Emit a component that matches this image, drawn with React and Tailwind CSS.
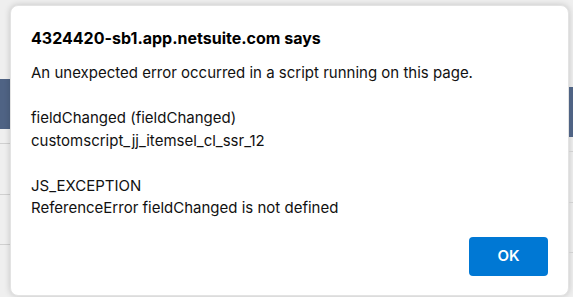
const lines = [
  'An unexpected error occurred in a script running on this page.',
  '',
  'fieldChanged (fieldChanged)',
  'customscript_jj_itemsel_cl_ssr_12',
  '',
  'JS_EXCEPTION',
  'ReferenceError fieldChanged is not defined',
];

const PageEdge = ({ top, className }) => (
  <div className={className}>
    <div style={{ height: top }} />
    <div className="h-[50px] bg-[#4f6384]" />
    <div className="h-[14px]" />
    <div className="h-px bg-[#d0d0d0]" />
    <div className="h-[50px]" />
    <div className="h-px bg-[#d0d0d0]" />
    <div className="h-[49px]" />
    <div className="h-px bg-[#d0d0d0]" />
  </div>
);

export default function App() {
  return (
    <div className="w-[573px] h-[297px] overflow-hidden bg-[#efefef] flex font-['Inter',sans-serif]">
      <PageEdge top={79} className="w-[10px] shrink-0" />

      <div className="mt-[5px] w-[559px] h-[291px] shrink-0 bg-white rounded-lg border border-[#e3e3e3] shadow-[0_0_6px_rgba(0,0,0,0.18)] pt-5 px-5 pb-[19px] flex flex-col">
        <h1 className="text-[16px] leading-6 font-bold text-black">
          4324420-sb1.app.netsuite.com says
        </h1>
        <div className="mt-3 text-[15px] leading-[22.5px] text-[#111111]">
          {lines.map((l, i) => (
            <div key={i} className="h-[22.5px] whitespace-pre">{l}</div>
          ))}
        </div>
        <div className="mt-auto flex justify-end">
          <button className="w-[79px] h-[39px] rounded-[4px] bg-[#0078d4] text-white text-[15px] font-semibold">
            OK
          </button>
        </div>
      </div>

      <PageEdge top={87} className="flex-1" />
    </div>
  );
}
